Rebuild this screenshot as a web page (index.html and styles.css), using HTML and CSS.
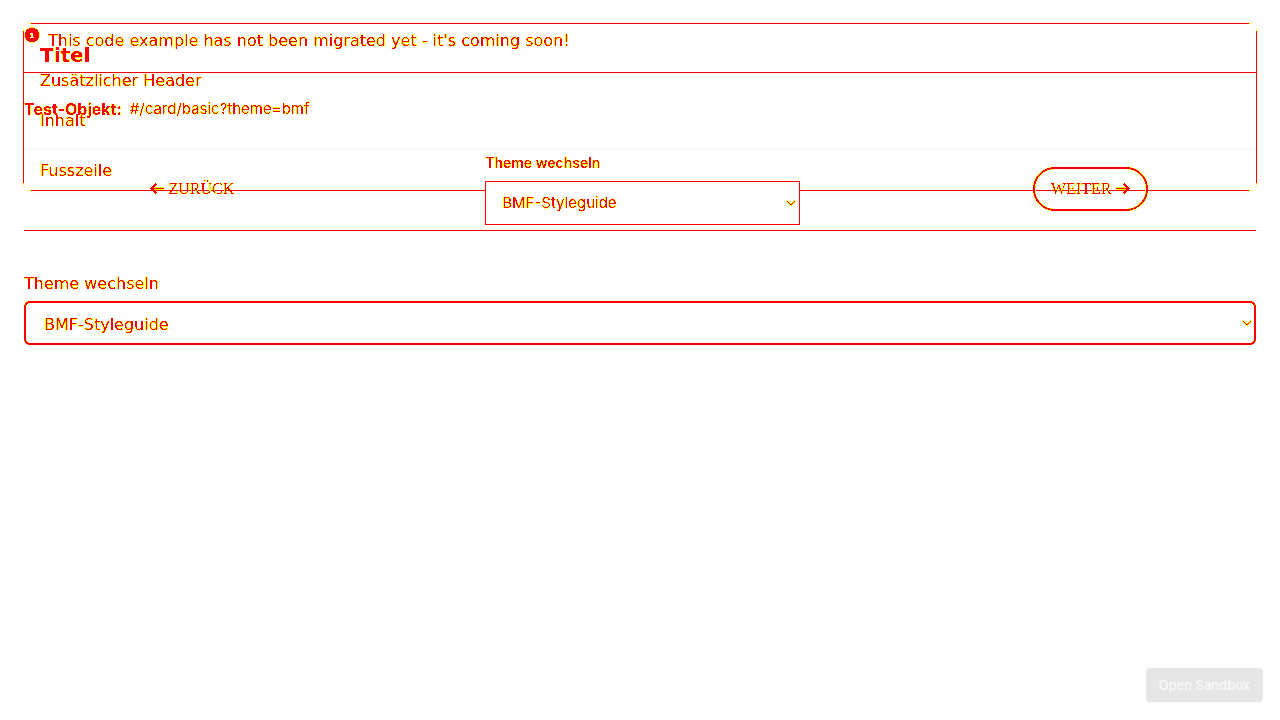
FILE: index.html
```
<!DOCTYPE html>
<html lang="de">
<head>
<meta charset="utf-8">
<title>Theme wechseln</title>
<link rel="stylesheet" href="styles.css">
</head>
<body>
<svg class="defs" aria-hidden="true">
  <filter id="edge" x="-5%" y="-20%" width="110%" height="140%" color-interpolation-filters="sRGB">
    <feColorMatrix values="0 0 0 0 1  0 0 0 1 0  0 0 0 0 0  0 0 0 1 0"/>
    <feComponentTransfer>
      <feFuncG type="discrete" tableValues="1 1 1 0 0"/>
      <feFuncA type="discrete" tableValues="0 1 1 1 1 1 1 1 1 1"/>
    </feComponentTransfer>
  </filter>
</svg>
<main class="stack">
  <article class="card layer">
    <header class="card-head edge">
      <h1 class="card-title">Titel</h1>
      <p class="line">Zusätzlicher Header</p>
    </header>
    <p class="card-body line edge">Inhalt</p>
    <footer class="card-foot line"><span class="edge">Fusszeile</span></footer>
  </article>
  <section class="sample layer">
    <div class="notice">
      <svg class="badge edge" viewBox="0 0 16 16" aria-hidden="true"><path fill="red" fill-rule="evenodd" d="M8 .5a7.5 7.5 0 1 0 0 15a7.5 7.5 0 0 0 0-15zM6 6h3v4h1v1H6v-1h1.500V7.500H6z"/></svg>
      <p class="line edge">This code example has not been migrated yet - it's coming soon!</p>
    </div>
    <p class="object edge"><strong>Test-Objekt:</strong><span class="object-path">#/card/basic?theme=bmf</span></p>
    <nav class="nav">
      <button class="btn edge" type="button"><svg class="arrow" viewBox="0 0 14 14" aria-hidden="true"><path d="M14 6.500H1.500M6.500 1.500l-5 5 5 5"/></svg>ZURÜCK</button>
      <div class="nav-field">
        <label class="nav-label edge" for="theme-nav">Theme wechseln</label>
        <div class="select-wrap select-wrap-filled">
          <select class="select-nav edge" id="theme-nav"><option>BMF-Styleguide</option></select>
          <svg class="chevron edge" viewBox="0 0 10 10" aria-hidden="true"><path d="M1 3l4 4 4-4"/></svg>
        </div>
      </div>
      <button class="btn btn-outline edge" type="button">WEITER<svg class="arrow" viewBox="0 0 14 14" aria-hidden="true"><path d="M0 6.500h12.500M7.500 1.500l5 5-5 5"/></svg></button>
    </nav>
  </section>
  <section class="theme layer">
    <label class="line edge" for="theme-main">Theme wechseln</label>
    <div class="select-wrap">
      <select class="select-main edge" id="theme-main"><option>BMF-Styleguide</option></select>
      <svg class="chevron edge" viewBox="0 0 10 10" aria-hidden="true"><path d="M1 3l4 4 4-4"/></svg>
    </div>
  </section>
</main>
<button class="sandbox" type="button">Open Sandbox</button>
</body>
</html>
```
FILE: styles.css
```
* { box-sizing: border-box; }
body {
  margin: 0;
  padding: 23px 23px 0;
  background: #fff;
  color: red;
  font: 16px/20px "DejaVu Sans", sans-serif;
}
h1, p { margin: 0; }
.defs { position: absolute; width: 0; height: 0; }
.edge { filter: url(#edge); }
.line { line-height: 20px; }

/* The three layers share one grid cell. */
.stack { display: grid; }
.layer { grid-area: 1 / 1; min-width: 0; }

.card {
  align-self: start;
  padding: 22px 0 10px;
  border-radius: 8px;
  background:
    linear-gradient(90deg, transparent 4px, yellow 4px 8px, red 8px calc(100% - 8px), yellow calc(100% - 8px) calc(100% - 4px), transparent 0) top / 100% 1px no-repeat,
    linear-gradient(90deg, transparent 4px, yellow 4px 8px, red 8px calc(100% - 8px), yellow calc(100% - 8px) calc(100% - 4px), transparent 0) bottom / 100% 1px no-repeat,
    linear-gradient(transparent 4px, yellow 4px 8px, red 8px calc(100% - 8px), yellow calc(100% - 8px) calc(100% - 4px), transparent 0) left / 1px 100% no-repeat,
    linear-gradient(transparent 4px, yellow 4px 8px, red 8px calc(100% - 8px), yellow calc(100% - 8px) calc(100% - 4px), transparent 0) right / 1px 100% no-repeat;
  box-shadow: 0 0 8px rgba(0, 0, 0, .03);
}
.card-head { padding: 0 17px; }
.card-title { margin-bottom: 6px; font-size: 20px; line-height: 20px; }
.card-body { padding: 20px 17px 17px; }
.card-foot { margin: 0 1px; padding: 11px 16px 0; border-top: 2px solid #fafafa; }

.sample { align-self: start; margin: 1px 1px 0; border-bottom: 1px solid red; }
.notice { display: flex; gap: 8px; padding: 3px 0 21px; border-bottom: 1px solid red; }
.notice .line { padding-top: 4px; }
.badge { flex: none; width: 16px; height: 16px; }
.object { display: flex; gap: 8px; padding: 24px 0; font-family: Inter, sans-serif; line-height: 24px; }
.object-path { font-size: 15px; }
.nav { display: flex; justify-content: space-around; align-items: center; gap: 16px; padding: 8px 0 5px; }
.btn {
  display: flex;
  align-items: center;
  gap: 4px;
  height: 44px;
  padding: 0 16px;
  border: 2px solid transparent;
  border-radius: 22px;
  background: transparent;
  color: red;
  font: 16px/20px "Liberation Serif", serif;
}
.btn-outline { border-color: red; }
.arrow { width: 14px; height: 14px; fill: none; stroke: red; stroke-width: 2; }
.nav-label { display: block; margin-bottom: 8px; font: 600 14px/20px Inter, sans-serif; }
.select-wrap { position: relative; }
.select-wrap-filled { background: #fff; }
.select-nav, .select-main {
  display: block;
  appearance: none;
  width: 100%;
  height: 44px;
  margin: 0;
  color: red;
  background: transparent;
  border: 1px solid red;
}
.nav-field { width: 315px; }
.select-nav { padding: 0 16px; font: 15px/20px Inter, sans-serif; }
.select-main { padding: 4px 18px 0; border-width: 2px; border-radius: 6px; font: 16px/20px "DejaVu Sans", sans-serif; }
.chevron { position: absolute; right: 4px; top: 17px; width: 10px; height: 10px; fill: none; stroke: red; stroke-width: 1.500; }

.theme { align-self: start; margin: 0 1px; padding-top: 251px; }
.theme .line { display: block; margin-bottom: 7px; }

.sandbox {
  position: fixed;
  right: 17px;
  bottom: 18px;
  height: 34px;
  padding: 0 13px;
  border: 0;
  border-radius: 4px;
  background: #e6e6e6;
  color: #fafafa;
  font: 500 13px/20px Inter, sans-serif;
}
```
